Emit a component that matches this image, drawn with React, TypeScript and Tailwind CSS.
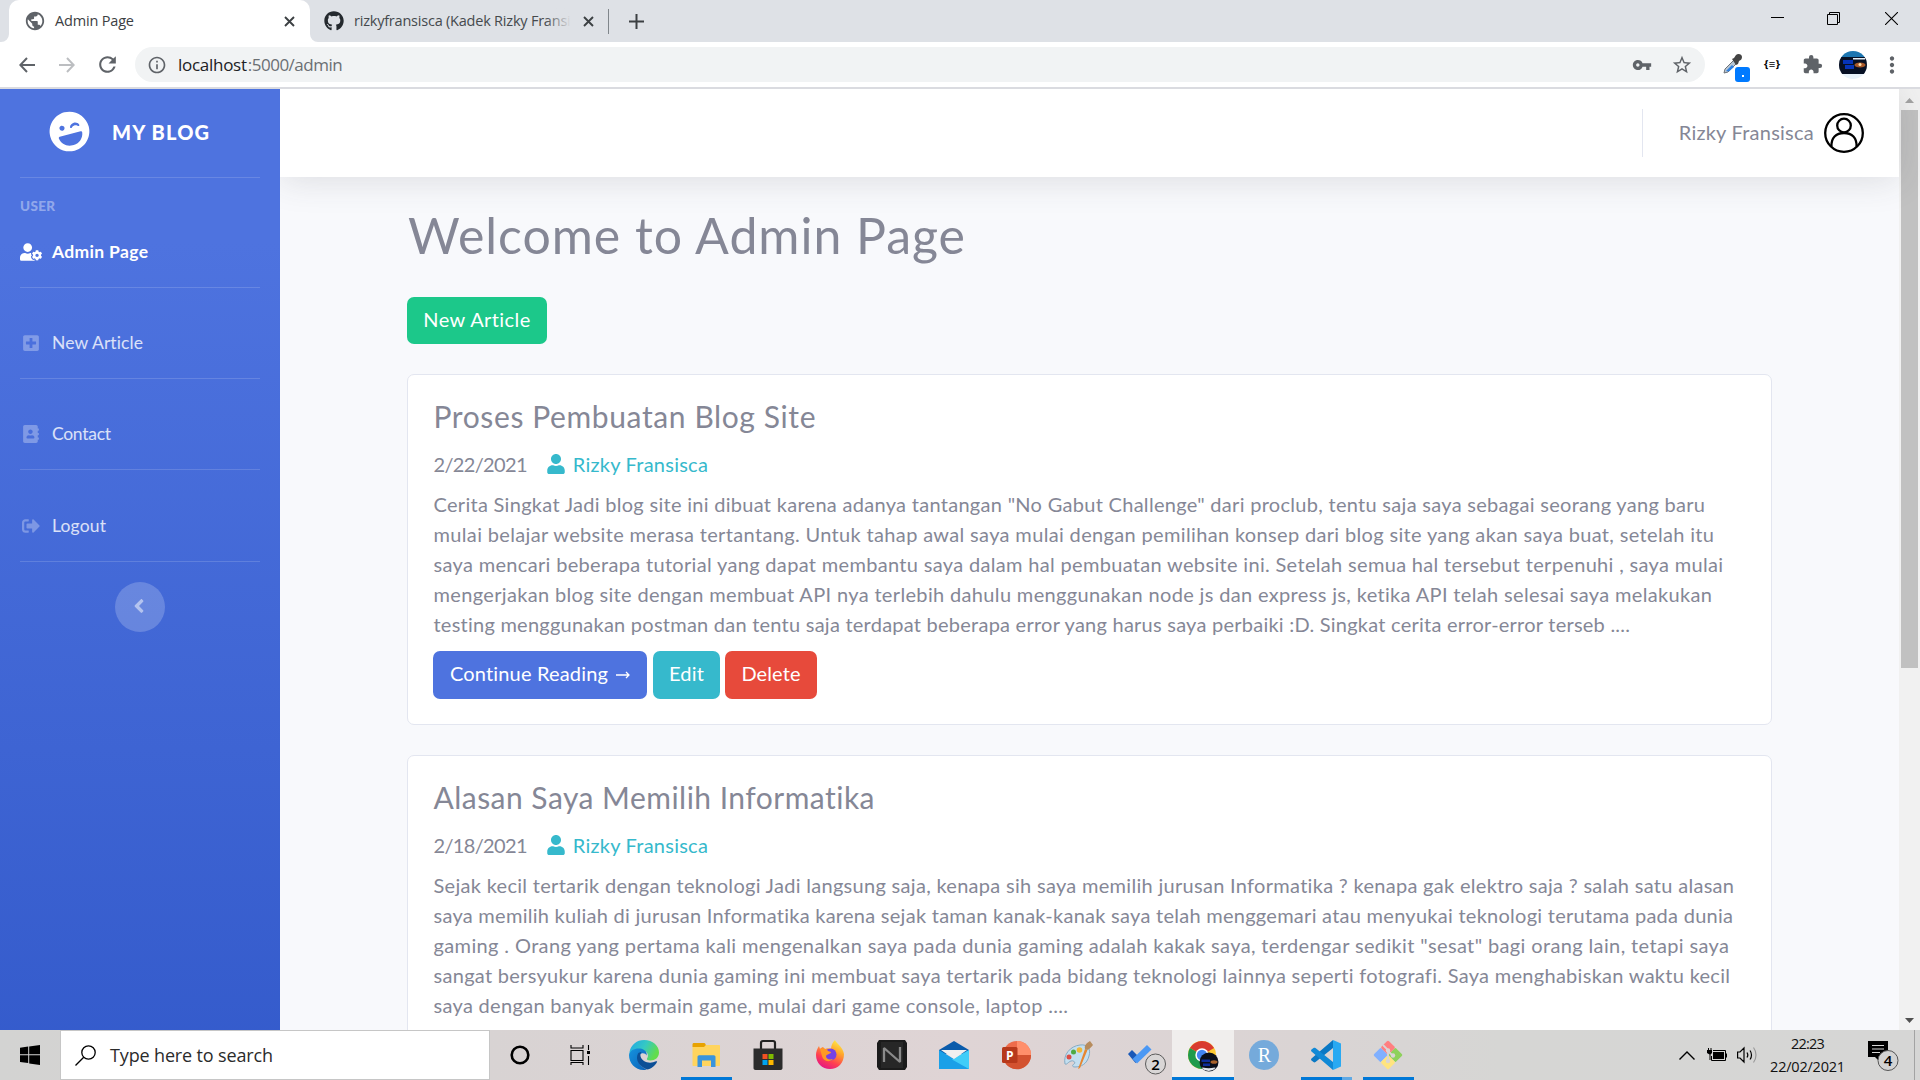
import React, { useLayoutEffect, useRef, useState } from "react";
import {
  FaAddressBook,
  FaAngleLeft,
  FaGithub,
  FaLaughWink,
  FaPlusSquare,
  FaSignOutAlt,
  FaUser,
  FaUserCog,
} from "react-icons/fa";
import { MdExtension, MdInfoOutline, MdMoreVert, MdPublic, MdRefresh, MdStarBorder, MdVpnKey } from "react-icons/md";

/** One line of text whose tracking is adjusted so that it spans `width` pixels. */
function Fit({ text, width, className = "" }: { text: string; width: number; className?: string }) {
  const ref = useRef<HTMLSpanElement>(null);
  const [spacing, setSpacing] = useState(0);
  useLayoutEffect(() => {
    const el = ref.current;
    if (!el) return;
    const n = text.length;
    const natural = el.getBoundingClientRect().width - spacing * n;
    const next = (width - natural) / (n - 1);
    if (Math.abs(next - spacing) > 0.001) setSpacing(next);
  });
  return (
    <span ref={ref} className={"inline-block whitespace-nowrap " + className} style={{ letterSpacing: spacing }}>
      {text}
    </span>
  );
}

type Line = [string, number];

const posts: { title: Line; date: string; body: Line[]; actions: boolean }[] = [
  {
    title: ["Proses Pembuatan Blog Site", 382],
    date: "2/22/2021",
    actions: true,
    body: [
      ['Cerita Singkat Jadi blog site ini dibuat karena adanya tantangan "No Gabut Challenge" dari proclub, tentu saja saya sebagai seorang yang baru', 1272],
      ["mulai belajar website merasa tertantang. Untuk tahap awal saya mulai dengan pemilihan konsep dari blog site yang akan saya buat, setelah itu", 1281],
      ["saya mencari beberapa tutorial yang dapat membantu saya dalam hal pembuatan website ini. Setelah semua hal tersebut terpenuhi , saya mulai", 1290],
      ["mengerjakan blog site dengan membuat API nya terlebih dahulu menggunakan node js dan express js, ketika API telah selesai saya melakukan", 1279],
      ["testing menggunakan postman dan tentu saja terdapat beberapa error yang harus saya perbaiki :D. Singkat cerita error-error terseb ....", 1197],
    ],
  },
  {
    title: ["Alasan Saya Memilih Informatika", 441],
    date: "2/18/2021",
    actions: false,
    body: [
      ["Sejak kecil tertarik dengan teknologi Jadi langsung saja, kenapa sih saya memilih jurusan Informatika ? kenapa gak elektro saja ? salah satu alasan", 1301],
      ["saya memilih kuliah di jurusan Informatika karena sejak taman kanak-kanak saya telah menggemari atau menyukai teknologi terutama pada dunia", 1300],
      ["gaming . Orang yang pertama kali mengenalkan saya pada dunia gaming adalah kakak saya, terdengar sedikit \"sesat\" bagi orang lain, tetapi saya", 1296],
      ["sangat bersyukur karena dunia gaming ini membuat saya tertarik pada bidang teknologi lainnya seperti fotografi. Saya menghabiskan waktu kecil", 1297],
      ["saya dengan banyak bermain game, mulai dari game console, laptop ....", 635],
    ],
  },
];

function Cross({ className = "" }: { className?: string }) {
  return (
    <svg className={className} width="11" height="11" viewBox="0 0 11 11" stroke="#3c4043" strokeWidth="1.9">
      <path d="M1 1l9 9M10 1l-9 9" />
    </svg>
  );
}

function TabStrip() {
  return (
    <div className="flex h-[42px] items-center bg-[#dee1e6]">
      <div className="relative ml-[9px] flex h-full w-[301px] items-center rounded-t-[10px] bg-white pl-[15px]">
        <svg className="absolute -left-2 bottom-0" width="8" height="8" fill="#fff"><path d="M8 0v8H0a8 8 0 0 0 8-8z" /></svg>
        <svg className="absolute -right-2 bottom-0" width="8" height="8" fill="#fff"><path d="M0 0v8h8a8 8 0 0 1-8-8z" /></svg>
        <MdPublic className="h-[22px] w-[22px] text-[#5f6368]" />
        <Fit text="Admin Page" width={79} className="ml-[9px] text-[14.5px] text-[#3c4043]" />
        <Cross className="absolute right-[15px]" />
      </div>
      <FaGithub className="ml-[14px] h-[20px] w-[20px] text-[#24292e]" />
      <div className="relative mb-[3px] ml-[10px] w-[217px] overflow-hidden">
        <Fit text="rizkyfransisca (Kadek Rizky Fransisca" width={238} className="align-middle text-[14.5px] text-[#45494d]" />
        <div className="absolute inset-y-0 right-0 w-[26px] bg-linear-to-r from-transparent to-[#dee1e6]" />
      </div>
      <Cross className="ml-[12px]" />
      <div className="ml-[14px] h-[25px] w-px bg-[#80868b]" />
      <svg className="ml-[20px]" width="15" height="15" viewBox="0 0 15 15" stroke="#3c4043" strokeWidth="2">
        <path d="M7.500 0v15M0 7.500h15" />
      </svg>
      <div className="mb-[6px] ml-auto mr-[22px] flex items-center gap-[43px]">
        <svg width="13" height="13" viewBox="0 0 13 13" stroke="#000"><path d="M0 5.500h13" /></svg>
        <svg width="13" height="13" viewBox="0 0 13 13" stroke="#000" fill="none"><path d="M.5 2.500h10v10H.5zM2.500 2.500v-2h10v10h-2" /></svg>
        <svg className="ml-[2px]" width="13" height="13" viewBox="0 0 13 13" stroke="#000" strokeWidth="1.100"><path d="M0 0l13 13M13 0L0 13" /></svg>
      </div>
    </div>
  );
}

function Toolbar() {
  return (
    <div className="flex h-[47px] items-center border-b-2 border-[#dadbe0] bg-white">
      <svg className="ml-[19px]" width="16" height="16" viewBox="0 0 16 16" fill="none" stroke="#5f6368" strokeWidth="2"><path d="M16 8H1.500M8 1L1.300 8 8 15" /></svg>
      <svg className="ml-[24px]" width="16" height="16" viewBox="0 0 16 16" fill="none" stroke="#bcbec1" strokeWidth="2"><path d="M0 8h14.500M8 1l6.700 7L8 15" /></svg>
      <MdRefresh className="ml-[20px] h-[25px] w-[25px] text-[#5f6368]" />
      <div className="ml-[15px] flex h-[35px] w-[1570px] items-center rounded-full bg-[#f1f3f4] pl-[12px] text-[17px]">
        <MdInfoOutline className="h-[20px] w-[20px] text-[#5f6368]" />
        <div className="ml-[11px] flex text-[#202124]">
          <Fit text="localhost" width={69} />
          <Fit text=":5000/admin" width={95} className="ml-px text-[#6b6f73]" />
        </div>
        <MdVpnKey className="ml-auto h-[20px] w-[20px] text-[#5f6368]" />
        <MdStarBorder className="ml-[19px] mr-[12px] h-[22px] w-[22px] text-[#5f6368]" />
      </div>
      <div className="relative ml-[18px] h-[36px] w-[28px]">
        <svg width="22" height="22" viewBox="0 0 22 22" className="mt-[6px]">
          <path d="M1 20l1-4 9-9 3 3-9 9z" fill="#b8c6d4" stroke="#6b7178" />
          <path d="M3 18l6-6 2 2-5 4.500z" fill="#2f80e0" />
          <path d="M9 6l2-1 2-3c2-2 6-1 6 2 0 2-1 3-3 4l-1 3-2 1z" fill="#444" />
        </svg>
        <div className="absolute left-[12px] top-[20px] flex h-[15px] w-[15px] items-center justify-center rounded-[3px] bg-[#007aff]">
          <div className="mt-[3px] h-[2px] w-[2px] bg-white" />
        </div>
      </div>
      <Fit text="{≡}" width={16} className="ml-[13px] text-[11px] font-bold text-black" />
      <MdExtension className="ml-[22px] h-[21px] w-[21px] text-[#5f6368]" />
      <svg className="ml-[16px]" width="28" height="28" viewBox="0 0 28 28">
        <clipPath id="avatar"><circle cx="14" cy="14" r="14" /></clipPath>
        <g clipPath="url(#avatar)">
          <path fill="#e8f2fa" d="M0 0h28v28H0z" />
          <path fill="#1c75b0" d="M0 0h28v7H0z" />
          <path fill="#071024" d="M0 6h28v17H0z" />
          <path fill="#0634b8" d="M4 9h10v4H4zM6 14h9v4H6z" />
          <path fill="#e6eef5" d="M14 7h12v1.500H14z" />
          <ellipse cx="21" cy="14" rx="5.500" ry="2.500" fill="#a8592a" />
          <circle cx="21" cy="13.500" r="1.500" fill="#ffe2ad" />
        </g>
      </svg>
      <MdMoreVert className="ml-[12px] h-[26px] w-[26px] text-[#5f6368]" />
    </div>
  );
}

function NavItem({ icon, label, width, active = false }: { icon: React.ReactNode; label: string; width: number; active?: boolean }) {
  return (
    <div className={active ? "flex h-6 items-center font-bold text-white" : "flex h-6 items-center text-white/80"}>
      <span className={active ? "flex w-8 items-center" : "flex w-8 items-center pl-[2px] text-white/30"}>{icon}</span>
      <Fit text={label} width={width} className="text-[17.5px]" />
    </div>
  );
}

function Sidebar() {
  return (
    <aside className="relative z-20 flex w-[280px] shrink-0 flex-col bg-[linear-gradient(180deg,#4e73df_154px,#224abe_1540px)] px-5 font-[Lato,sans-serif]">
      <div className="flex h-[88px] items-center pb-[3px] pl-[29px] text-white">
        <FaLaughWink className="h-[41px] w-[41px] -rotate-[15deg]" />
        <Fit text="MY BLOG" width={97} className="ml-[22px] text-[20px] font-black" />
      </div>
      <div className="h-px bg-white/15" />
      <div className="mt-[17px] h-5 leading-5 text-white/40">
        <Fit text="USER" width={35} className="text-[13.500px] font-black" />
      </div>
      <div className="mt-[25px]"><NavItem active icon={<FaUserCog className="h-[18px] w-[22px]" />} label="Admin Page" width={96} /></div>
      <div className="mt-[23px] h-px bg-white/15" />
      <div className="mt-[43px]"><NavItem icon={<FaPlusSquare className="h-[18px] w-[18px]" />} label="New Article" width={91} /></div>
      <div className="mt-[23px] h-px bg-white/15" />
      <div className="mt-[43px]"><NavItem icon={<FaAddressBook className="h-[18px] w-[18px]" />} label="Contact" width={59} /></div>
      <div className="mt-[23px] h-px bg-white/15" />
      <div className="mt-[44px]"><NavItem icon={<FaSignOutAlt className="h-[18px] w-[18px]" />} label="Logout" width={54} /></div>
      <div className="mt-[23px] h-px bg-white/15" />
      <div className="mt-[20px] flex h-[50px] w-[50px] items-center justify-center self-center rounded-full bg-white/20 pb-[3px] pr-[2px] text-white/50">
        <FaAngleLeft className="h-[22px] w-[22px]" />
      </div>
    </aside>
  );
}

function Post({ post }: { post: (typeof posts)[number] }) {
  return (
    <article className="mt-[30px] rounded-[7px] border border-[#e3e6f0] bg-white pb-[25px] pl-[25.500px] pt-[23px]">
      <h2 className="h-9 text-[30px] leading-9"><Fit text={post.title[0]} width={post.title[1]} /></h2>
      <div className="mt-[15px] flex h-[30px] items-center">
        <Fit text={post.date} width={94} />
        <FaUser className="ml-[19px] h-[20px] w-[20px] text-[#36b9cc]" />
        <Fit text="Rizky Fransisca" width={135} className="ml-[7px] text-[#36b9cc]" />
      </div>
      <div className="mt-[10px]">
        {post.body.map(([text, width]) => (
          <div key={text} className="h-[30px]"><Fit text={text} width={width - 0.5} /></div>
        ))}
      </div>
      {post.actions && (
        <div className="-ml-[0.500px] mt-[12px] flex h-12 text-white">
          <div className="flex w-[214px] items-center justify-center rounded-[7px] bg-[#4e73df] pb-[4px]">
            <Fit text="Continue Reading" width={158} />
            <svg className="ml-[8px] mt-[4px]" width="14" height="8" viewBox="0 0 14 8" fill="none" stroke="#fff" strokeWidth="1.300"><path d="M0 4h13M10 1l3 3-3 3" /></svg>
          </div>
          <div className="ml-[6px] flex w-[67px] items-center justify-center rounded-[7px] bg-[#36b9cc] pb-[4px]"><Fit text="Edit" width={35} /></div>
          <div className="ml-[5px] flex w-[92px] items-center justify-center rounded-[7px] bg-[#e74a3b] pb-[4px]"><Fit text="Delete" width={59} /></div>
        </div>
      )}
    </article>
  );
}

function Content() {
  return (
    <main className="flex min-w-0 flex-1 flex-col bg-[#f8f9fc] font-[Lato,sans-serif] text-[20px] leading-[30px] text-[#858796]">
      <header className="z-10 flex h-[88px] shrink-0 items-center bg-white shadow-[0_3px_35px_rgba(58,59,69,0.15)]">
        <div className="ml-auto h-12 w-px bg-[#e3e6f0]" />
        <Fit text="Rizky Fransisca" width={135} className="mb-[3px] ml-[36px]" />
        <svg className="ml-[10px] mr-[35px]" width="40" height="40" viewBox="0 0 40 40" fill="none" stroke="#000" strokeWidth="2.300">
          <circle cx="20" cy="20" r="18.800" />
          <circle cx="20" cy="12.500" r="6.800" />
          <path d="M7.500 33.500C7 25 12 20 20 20s13 5 12.500 13.500" />
        </svg>
      </header>
      <div className="w-[1492px] pl-[127px] pt-[28px]">
        <h1 className="h-[60px] text-[50px] leading-[60px]"><Fit text="Welcome to Admin Page" width={558} className="pl-px" /></h1>
        <div className="mt-[32px] flex h-[47px] w-[140px] items-center justify-center rounded-[7px] bg-[#1cc88a] pb-[4px] text-white"><Fit text="New Article" width={107} /></div>
        {posts.map((p) => <Post key={p.date} post={p} />)}
      </div>
    </main>
  );
}

function Scrollbar() {
  return (
    <div className="flex w-[21px] shrink-0 flex-col items-center bg-[#f1f1f1]">
      <svg className="mt-[9px]" width="9" height="5" fill="#a3a3a3"><path d="M4.500 0L9 5H0z" /></svg>
      <div className="mt-[7px] h-[558px] w-[17px] bg-[#c1c1c1]" />
      <svg className="mb-[7px] mt-auto" width="9" height="5" fill="#505050"><path d="M4.500 5L9 0H0z" /></svg>
    </div>
  );
}

function Glyph({ children }: { children: React.ReactNode }) {
  return <svg width="30" height="30" viewBox="0 0 30 30" className="mr-[2px] overflow-visible">{children}</svg>;
}

function Edge() {
  return (
    <Glyph>
      <defs>
        <linearGradient id="e1" x1="0" x2="1" y1="0" y2=".4"><stop offset="0" stopColor="#1fa6e8" /><stop offset=".55" stopColor="#35c9c3" /><stop offset="1" stopColor="#62dd4c" /></linearGradient>
        <linearGradient id="e2" x1="0" x2="1" y1="0" y2="1"><stop offset="0" stopColor="#1593de" /><stop offset="1" stopColor="#0c62b8" /></linearGradient>
      </defs>
      <path d="M.5 12C2 4.500 8 0 15 0c9 0 15 6 15 12.500 0 5-4 8-8.500 8-3 0-4-1-3.500-2 2.500-3 0-8-5-8.500C8 9.500 3 11 .5 15z" fill="url(#e1)" />
      <path d="M0 15c1-5 6-7 11-6.500 5 .5 7.500 4 6.500 7-1-2.500-5-3-7-.500-3 4-1 11 7 14.500-1 .5-2 .5-3 .5C6 30 0 23 0 15z" fill="url(#e2)" />
      <path d="M9 13.500c-3 6 1 13 9 16 4-.5 8-3.500 10-7.500.4-.8-.3-1-1-.7-6 3-14 1-15.500-5C11 14 12 12 13 12c-2 0-3 .5-4 1.500z" fill="#0c4f96" />
    </Glyph>
  );
}

function Explorer() {
  return (
    <Glyph>
      <path d="M1.500 4.500c0-1 .5-1.500 1.500-1.500h10c1.500 0 2 2 2 4H1.500z" fill="#e8a200" />
      <path d="M1.500 7H13l2-2h13c.6 0 1 .4 1 1v19c0 .6-.4 1-1 1H2.500c-.6 0-1-.4-1-1z" fill="#ffd45e" />
      <path d="M6.500 27V17c0-1 .7-1.700 1.700-1.700h14.600c1 0 1.700.7 1.700 1.700v10H20v-6.500h-9V27z" fill="#3a94dc" />
    </Glyph>
  );
}

function Store() {
  return (
    <Glyph>
      <path d="M8 9V3c0-1.200.8-2 2-2h10c1.200 0 2 .8 2 2v6" fill="none" stroke="#222" strokeWidth="2.200" />
      <path d="M.5 8.500h29V28c0 1.200-.8 2-2 2h-25c-1.200 0-2-.8-2-2z" fill="#2c2c2c" />
      <path d="M9.500 14h5v5h-5z" fill="#f25022" /><path d="M15.500 14h5v5h-5z" fill="#7fba00" />
      <path d="M9.500 20h5v5h-5z" fill="#00a4ef" /><path d="M15.500 20h5v5h-5z" fill="#ffb900" />
    </Glyph>
  );
}

function Firefox() {
  return (
    <Glyph>
      <defs><linearGradient id="f1" x1=".8" x2=".3" y1="0" y2="1"><stop offset="0" stopColor="#fff04a" /><stop offset=".35" stopColor="#ffa62b" /><stop offset=".7" stopColor="#ff4050" /><stop offset="1" stopColor="#e31587" /></linearGradient></defs>
      <path d="M20 0c1 3 8 7 9 14 0 9-6 15-14 15S1 23 1 15c0-3 1-6 3-9l1 3c1-1 2-2 3-2l2 2c2-1 4-1 6 0 0-4 2-7 4-9z" fill="url(#f1)" />
      <circle cx="15.500" cy="14.500" r="6" fill="#7542e5" />
      <path d="M5 9c4-1 7 0 8 2l3 1c0 2-4 2-5 4 0 3 3 4 7 3-4 4-10 2-11-3z" fill="#ff9a24" />
    </Glyph>
  );
}

function Nox() {
  return (
    <Glyph>
      <path d="M2 0h26l2 3v24l-2 3H2l-2-3V3z" fill="#1b1b1b" />
      <path d="M4 2h22v26H4z" fill="#272727" />
      <path d="M7 22V8l16 14V7" fill="none" stroke="#8a8a8a" strokeWidth="2.300" strokeLinejoin="bevel" />
    </Glyph>
  );
}

function Mail() {
  return (
    <Glyph>
      <path d="M0 10L15 1l15 9v4H0z" fill="#0a5bab" />
      <path d="M0 10l15 9L30 10v19H0z" fill="#1aa0e8" />
      <path d="M30 10L13 19.500 30 29z" fill="#40cdf8" />
      <path d="M2 10h26l-13 9z" fill="#f0f0f0" />
    </Glyph>
  );
}

function PowerPoint() {
  return (
    <Glyph>
      <circle cx="16" cy="15" r="14" fill="#ee6c4b" />
      <path d="M16 1a14 14 0 0 1 14 14H16z" fill="#ff8f6b" />
      <path d="M2.500 19A14 14 0 0 0 30 15H16z" fill="#d35230" />
      <rect x="1" y="7" width="15.500" height="16" rx="1.500" fill="#b7391b" />
      <text x="8.700" y="19.500" textAnchor="middle" fill="#fff" fontSize="12" className="font-['Open_Sans',sans-serif] font-bold">P</text>
    </Glyph>
  );
}

function Paint() {
  return (
    <Glyph>
      <path d="M2 24C0 15 7 6 17 5c8-1 11 4 9 11-2 8-8 11-14 11-3 0-3-2-1-3s0-4-3-3-4 4-6 3z" fill="#c3dff0" stroke="#86abc4" />
      <circle cx="6" cy="17" r="2.500" fill="#dc4d45" /><circle cx="10.500" cy="12" r="2.500" fill="#4eaa43" /><circle cx="16.500" cy="10" r="2.800" fill="#f0b93a" />
      <path d="M15 29l7-20 2.500 1L17 28z" fill="#e68630" />
      <path d="M22 9c-1-4 2-6 5-8l3 4c-2 2-4 5-6 5z" fill="#b78c5d" />
    </Glyph>
  );
}

function Todo() {
  return (
    <Glyph>
      <path d="M3 14l4-4 8 8-4.500 5z" fill="#1958b8" />
      <path d="M22 5l4.500 4.500L12 23.500 7.500 19z" fill="#4b98f4" />
      <circle cx="30.500" cy="24" r="10" fill="#d9d6d6" stroke="#5c5c5c" />
      <text x="30.500" y="29.500" textAnchor="middle" fontSize="15" fill="#000" className="font-['Open_Sans',sans-serif] font-semibold">2</text>
    </Glyph>
  );
}

function Chrome() {
  return (
    <Glyph>
      <circle cx="15" cy="15" r="14" fill="#fcc934" />
      <path d="M15 15L2.900 8A14 14 0 0 1 27.100 8z" fill="#d93a2f" />
      <path d="M15 15L2.900 8A14 14 0 0 0 15 29l6-10z" fill="#1e9b4c" />
      <circle cx="15" cy="15" r="6.700" fill="#fff" /><circle cx="15" cy="15" r="5.200" fill="#4285f4" />
      <circle cx="22" cy="22" r="9.500" fill="#0a0f1c" />
      <path d="M14.700 28a9.500 9.500 0 0 0 14 0l-1-.5c-4 1-8 1-12 0z" fill="#dfe5ec" />
      <path d="M14.500 19.500h8.500v2.500h-8.500zM16 23.500h7v2.500h-7z" fill="#0d2e9c" /><ellipse cx="27" cy="22" rx="3.500" ry="1.800" fill="#a8622c" />
    </Glyph>
  );
}

function RStudio() {
  return (
    <Glyph>
      <circle cx="15" cy="15" r="15" fill="#75aadb" />
      <text x="15.300" y="21.500" textAnchor="middle" fontSize="20" fill="#fff" className="font-['Liberation_Serif',serif]">R</text>
    </Glyph>
  );
}

function Code() {
  return (
    <Glyph>
      <path d="M22 0l8 3.500v23L22 30z" fill="#29a9f2" />
      <path d="M22 0v8L4.500 22c-.7.500-1.500.5-2 0L.5 20.500c-.6-.6-.6-1.400 0-2z" fill="#0a78c4" />
      <path d="M22 30v-8L4.500 8c-.7-.5-1.500-.5-2 0L.5 9.500c-.6.6-.6 1.400 0 2z" fill="#1089d6" />
    </Glyph>
  );
}

function GitBash() {
  return (
    <Glyph>
      <g transform="rotate(45 15 15)">
        <rect x="4.500" y="4.500" width="10.500" height="10.500" rx="1.500" fill="#ff7f80" />
        <rect x="15" y="4.500" width="10.500" height="10.500" rx="1.500" fill="#8ed15c" />
        <rect x="4.500" y="15" width="10.500" height="10.500" rx="1.500" fill="#80b0ff" />
        <rect x="15" y="15" width="10.500" height="10.500" rx="1.500" fill="#ffe47f" />
      </g>
      <path d="M10 5l5 5v11M15 11l5 5" fill="none" stroke="#d9d5d5" strokeWidth="1.800" />
      <circle cx="15" cy="10.500" r="2.200" fill="#d9d5d5" /><circle cx="15" cy="21" r="2.200" fill="#d9d5d5" /><circle cx="20" cy="15.500" r="2.200" fill="#d9d5d5" />
    </Glyph>
  );
}

function Slot({ children, bar = "", active = false }: { children: React.ReactNode; bar?: string; active?: boolean }) {
  return (
    <div className={"relative flex w-[62px] items-center justify-center " + (active ? "bg-[#f0eeed]" : "")}>
      {children}
      {bar && <div className={"absolute bottom-0 h-[3px] bg-[#0078d7] " + bar} />}
    </div>
  );
}

function Taskbar() {
  return (
    <footer className="flex h-[50px] items-stretch bg-[linear-gradient(90deg,#d3d3d2_0px,#d8d3d3_490px,#dfd4d5_960px,#dad4d4_1300px,#d6d6d4_1500px,#d6d6d5_1920px)]">
      <div className="flex w-[60px] items-center pl-[20px]">
        <svg width="20" height="20" viewBox="0 0 20 20"><path d="M0 2.800L8.200 1.600v7.700H0zM9.200 1.400L20 0v9.300H9.200zM0 10.200h8.200v7.900L0 17zM9.200 10.200H20V20L9.200 18.400z" /></svg>
      </div>
      <div className="flex w-[430px] items-center border border-[#c6c6c6] bg-white pl-[14px]">
        <svg width="21" height="21" viewBox="0 0 21 21" fill="none" stroke="#000" strokeWidth="1.300"><circle cx="13.500" cy="7.500" r="6.700" /><path d="M8.700 12.300L.5 20.500" /></svg>
        <Fit text="Type here to search" width={163} className="ml-[14px] text-[18px] text-[#2b2b2b]" />
      </div>
      <Slot><svg className="mr-[2px]" width="20" height="20" fill="none" stroke="#000" strokeWidth="2.600"><circle cx="10" cy="10" r="8.300" /></svg></Slot>
      <Slot><svg className="mr-[5px]" width="21" height="20" viewBox="0 0 21 20" fill="none" stroke="#000" strokeWidth="1.100"><path d="M1 0v3h12V0M1 5.500h12v10H1zM1 20v-2.500h12V20M18.500 0v5M18.500 11v9" /><path d="M17 6h3v3h-3z" fill="#000" stroke="none" /></svg></Slot>
      <Slot><Edge /></Slot>
      <Slot bar="left-[5px] w-[51px]"><Explorer /></Slot>
      <Slot><Store /></Slot>
      <Slot><Firefox /></Slot>
      <Slot><Nox /></Slot>
      <Slot><Mail /></Slot>
      <Slot><PowerPoint /></Slot>
      <Slot><Paint /></Slot>
      <Slot><Todo /></Slot>
      <Slot active bar="inset-x-0"><Chrome /></Slot>
      <Slot><RStudio /></Slot>
      <Slot bar="left-[5px] w-[51px] border-r-[10px] border-[#5fa9e4]"><Code /></Slot>
      <Slot bar="left-[5px] w-[51px]"><GitBash /></Slot>
      <div className="ml-auto flex items-center text-[#111]">
        <svg width="16" height="9" viewBox="0 0 16 9" fill="none" stroke="#000" strokeWidth="1.400"><path d="M.5 8.500L8 1l7.500 7.500" /></svg>
        <svg className="ml-[12px]" width="20" height="14" viewBox="0 0 20 14">
          <path d="M6 2.500h12.500v10H4.500V8" fill="none" stroke="#000" /><path d="M6 4h11v7H6zM19 5.500h1v4h-1z" />
          <path d="M0 2h1V0h1v2h1.500V0h1v2H5v3L3.500 6.500V12h-1V6.500L0 5z" />
        </svg>
        <svg className="ml-[10px]" width="21" height="18" viewBox="0 0 21 18" fill="none" stroke="#000" strokeWidth="1.200">
          <path d="M.6 6v6H3l4 4V2L3 6zM10 6.500c1 1.500 1 3.500 0 5M13 4.500c2 2.500 2 6.500 0 9" /><path d="M16.500 1.500c3.300 4.300 3.300 10.700 0 15" stroke="#999" />
        </svg>
        <div className="ml-[11px] flex w-[77px] flex-col items-center text-[14.500px] leading-[23px]">
          <Fit text="22:23" width={34} />
          <Fit text="22/02/2021" width={75} />
        </div>
        <svg className="ml-[22px]" width="31" height="34" viewBox="0 0 31 34">
          <path d="M0 3h20v16h-9v4l-4-4H0z" /><path d="M4 7.500h12M4 11h12M4 14.500h8" stroke="#d6d6d5" strokeWidth="1.200" />
          <circle cx="20" cy="22.500" r="10" fill="#d3d3d3" stroke="#555" />
          <text x="20" y="28" textAnchor="middle" fontSize="15" className="font-['Open_Sans',sans-serif] font-semibold">4</text>
        </svg>
        <div className="ml-[15px] mr-[5px] h-[50px] w-px bg-[#a3a3a3]" />
      </div>
    </footer>
  );
}

export default function App() {
  return (
    <div className="flex h-[1080px] w-[1920px] flex-col overflow-hidden font-['Open_Sans',sans-serif]">
      <TabStrip />
      <Toolbar />
      <div className="flex h-[941px] overflow-hidden">
        <Sidebar />
        <Content />
        <Scrollbar />
      </div>
      <Taskbar />
    </div>
  );
}
